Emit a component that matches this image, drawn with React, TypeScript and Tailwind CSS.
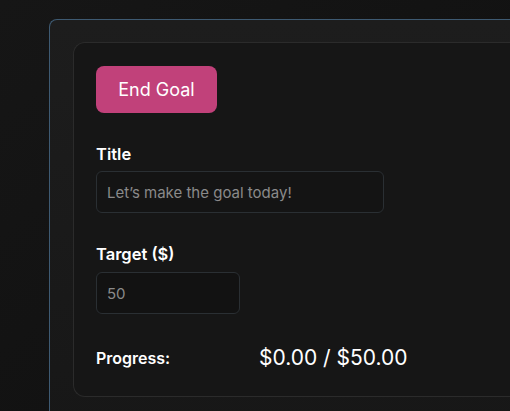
export default function App() {
  return (
    <div
      className="h-[411px] w-full overflow-hidden bg-gradient-to-br from-[#161616] to-[#0f0f0f] pl-[49px] pt-[19px]"
      style={{ fontFamily: 'Inter, "Noto Sans", sans-serif' }}
    >
      <div className="h-[420px] rounded-tl-lg border-l border-t border-[#3e5a72] bg-gradient-to-b from-[#1d1d1d] to-[#171717] pl-[23px] pt-[22px]">
        <div className="h-[355px] rounded-l-xl border-y border-l border-[#2b2b2b] bg-[#161616] pl-[22px] pt-[23px]">
          <button className="h-[47px] w-[121px] rounded-lg bg-[#c1417a] text-[18px] text-white">
            End Goal
          </button>

          <div className="mt-[31px] text-[16.5px] font-semibold leading-5 text-white">Title</div>
          <input
            className="mt-[7px] h-[42px] w-[288px] rounded-md border border-[#2a2f33] bg-[#141414] px-[10px] text-[15px] text-gray-300 placeholder:text-[#8a8a8a] outline-none"
            placeholder="Let’s make the goal today!"
          />

          <div className="mt-[31px] text-[16.5px] font-semibold leading-5 text-white">Target ($)</div>
          <input
            className="mt-[8px] h-[42px] w-[144px] rounded-md border border-[#2a2f33] bg-[#121212] px-[10px] text-[15px] text-[#8a8a8a] outline-none"
            defaultValue="50"
          />

          <div className="mt-[28px] flex items-center">
            <span className="w-[163px] text-[16px] font-semibold text-white">Progress:</span>
            <span className="text-[21px] text-white">$0.00 / $50.00</span>
          </div>
        </div>
      </div>
    </div>
  );
}
